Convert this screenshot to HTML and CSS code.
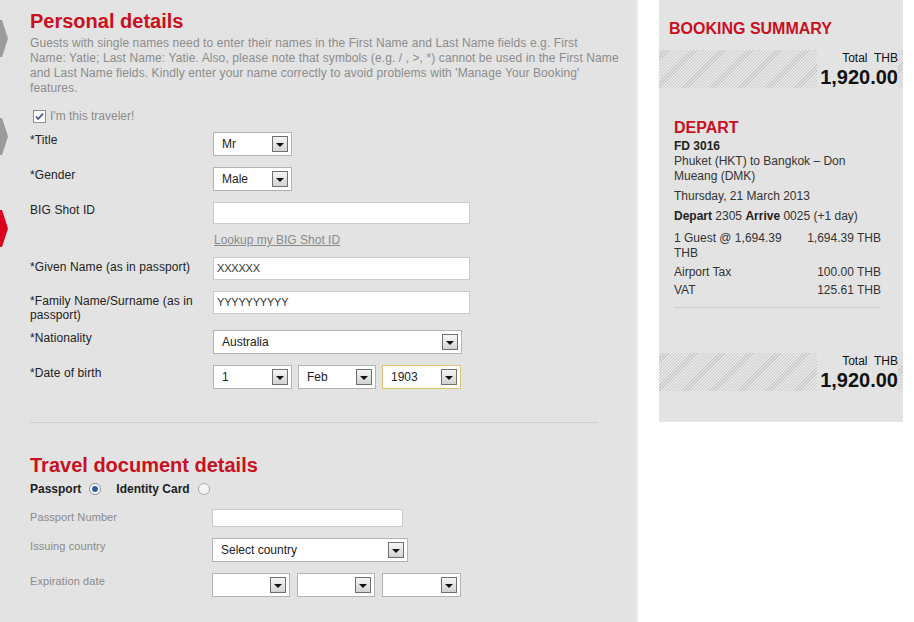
FILE: index.html
```html
<!DOCTYPE html>
<html lang="en">
<head>
    <meta charset="UTF-8">
    <title>Guest details</title>
    <link rel="stylesheet" href="styles.css">
</head>
<body>
    <div class="main">
        <div class="steps">
            <div class="step"></div>
            <div class="step step-2"></div>
            <div class="step step-3 active"></div>
        </div>

        <div class="content">
            <h1 class="title">Personal details</h1>
            <p class="intro">Guests with single names need to enter their names in the First Name and Last Name fields e.g. First<br>Name: Yatie; Last Name: Yatie. Also, please note that symbols (e.g. / , &gt;, *) cannot be used in the First Name<br>and Last Name fields. Kindly enter your name correctly to avoid problems with 'Manage Your Booking'<br>features.</p>

            <div class="check-line">
                <svg class="checkbox" width="13" height="13" viewBox="0 0 13 13">
                    <rect x="0.5" y="0.5" width="12" height="12" fill="#fff" stroke="#8a8f98"/>
                    <path d="M3 6.5 L5.2 9 L10 3.6" fill="none" stroke="#3c5a8c" stroke-width="1.8"/>
                </svg>
                <span>I'm this traveler!</span>
            </div>

            <div class="row">
                <label>*Title</label>
                <div class="select w79"><span>Mr</span><i class="arrow"></i></div>
            </div>
            <div class="row">
                <label>*Gender</label>
                <div class="select w79"><span>Male</span><i class="arrow"></i></div>
            </div>
            <div class="row">
                <label>BIG Shot ID</label>
                <div class="text"></div>
            </div>
            <div class="row link-row">
                <label></label>
                <a class="lookup" href="#">Lookup my BIG Shot ID</a>
            </div>
            <div class="row name-row">
                <label>*Given Name (as in passport)</label>
                <div class="text">XXXXXX</div>
            </div>
            <div class="row name-row">
                <label>*Family Name/Surname (as in passport)</label>
                <div class="text">YYYYYYYYYY</div>
            </div>
            <div class="row nationality">
                <label>*Nationality</label>
                <div class="select w249"><span>Australia</span><i class="arrow"></i></div>
            </div>
            <div class="row">
                <label>*Date of birth</label>
                <div class="date">
                    <div class="select w79"><span>1</span><i class="arrow"></i></div>
                    <div class="select w78"><span>Feb</span><i class="arrow"></i></div>
                    <div class="select w79 focus"><span>1903</span><i class="arrow"></i></div>
                </div>
            </div>

            <hr class="divider">

            <h1 class="title">Travel document details</h1>
            <div class="doc-type">
                <span>Passport</span>
                <svg class="radio" width="12" height="12" viewBox="0 0 12 12">
                    <circle cx="6" cy="6" r="5.5" fill="#fff" stroke="#8a8f98"/>
                    <circle cx="6" cy="6" r="3" fill="#2c5f9a"/>
                </svg>
                <span class="second">Identity Card</span>
                <svg class="radio" width="12" height="12" viewBox="0 0 12 12">
                    <circle cx="6" cy="6" r="5.5" fill="#f4f4f4" stroke="#a8acb2"/>
                </svg>
            </div>

            <div class="row doc-row">
                <label>Passport Number</label>
                <div class="text small"></div>
            </div>
            <div class="row doc-row">
                <label>Issuing country</label>
                <div class="select w196"><span>Select country</span><i class="arrow"></i></div>
            </div>
            <div class="row doc-row">
                <label>Expiration date</label>
                <div class="date wide">
                    <div class="select w78"><span></span><i class="arrow"></i></div>
                    <div class="select w78"><span></span><i class="arrow"></i></div>
                    <div class="select w79"><span></span><i class="arrow"></i></div>
                </div>
            </div>
        </div>
    </div>

    <div class="summary">
        <h2 class="summary-title">BOOKING SUMMARY</h2>
        <div class="total-band">
            <div class="total">
                <div class="total-label">Total&nbsp; THB</div>
                <div class="total-amount">1,920.00</div>
            </div>
        </div>

        <div class="flight">
            <h3 class="depart">DEPART</h3>
            <div class="flight-no">FD 3016</div>
            <div>Phuket (HKT) to Bangkok – Don<br>Mueang (DMK)</div>
            <div class="gap">Thursday, 21 March 2013</div>
            <div class="gap"><b>Depart</b> 2305 <b>Arrive</b> 0025 (+1 day)</div>
            <div class="price first">
                <span>1 Guest @ 1,694.39 THB</span>
                <span class="amount">1,694.39 THB</span>
            </div>
            <div class="price">
                <span>Airport Tax</span>
                <span class="amount">100.00 THB</span>
            </div>
            <div class="price last">
                <span>VAT</span>
                <span class="amount">125.61 THB</span>
            </div>
            <hr class="summary-line">
        </div>

        <div class="total-band bottom">
            <div class="total">
                <div class="total-label">Total&nbsp; THB</div>
                <div class="total-amount">1,920.00</div>
            </div>
        </div>
    </div>
</body>
</html>
```

FILE: styles.css
```css
body {
    margin: 0;
    font-family: "Liberation Sans", Arial, sans-serif;
    font-size: 12px;
    color: #222;
    background: #fff;
    display: flex;
    align-items: flex-start;
}
.main {
    width: 635px;
    min-height: 622px;
    background: #e3e3e3;
    border-right: 3px solid #e9e9e9;
    display: flex;
    align-items: flex-start;
}
.steps {
    width: 8px;
    padding-top: 20px;
    display: flex;
    flex-direction: column;
}
.step {
    height: 37px;
    background: #9b9b9b;
    clip-path: polygon(0 0, 25% 0, 100% 50%, 25% 100%, 0 100%);
}
.step-2 { margin-top: 61px; }
.step-3 { margin-top: 55px; }
.step.active { background: #d9001b; }

.content {
    width: 605px;
    padding: 10px 0 0 22px;
}
.title {
    margin: 0;
    font-size: 20px;
    line-height: 22px;
    font-weight: bold;
    color: #c8101e;
}
.intro {
    margin: 4px 0 0;
    line-height: 15px;
    color: #8c8c8c;
    white-space: nowrap;
    letter-spacing: 0.1px;
}
.check-line {
    margin-top: 12px;
    height: 16px;
    display: flex;
    align-items: center;
    color: #8c8c8c;
}
.checkbox { margin: 0 4px 0 3px; }

.row {
    display: grid;
    grid-template-columns: 183px 1fr;
    margin-top: 11px;
    align-items: start;
}
.check-line + .row { margin-top: 8px; }
.row label {
    padding: 1px 10px 0 0;
    line-height: 14px;
    letter-spacing: 0.1px;
}
.name-row label { padding-top: 3px; }
.link-row {
    line-height: 12px;
    margin-top: 10px;
}
.lookup {
    margin-left: 1px;
    color: #8a8a8a;
    text-decoration: underline;
}
.link-row + .row { margin-top: 11px; }
.row.nationality { margin-top: 8px; }
.text {
    width: 257px;
    height: 22px;
    box-sizing: border-box;
    border: 1px solid #cbcbcb;
    background: #fff;
    padding: 0 3px;
    font-size: 11px;
    line-height: 20px;
    color: #333;
    letter-spacing: -0.2px;
}
.name-row .text { height: 23px; line-height: 21px; }
.text.small {
    width: 191px;
    height: 18px;
}
.select {
    height: 24px;
    box-sizing: border-box;
    border: 1px solid #b3b3b3;
    background: #fff;
    padding: 0 3px 0 8px;
    display: flex;
    align-items: center;
    justify-content: space-between;
    color: #222;
}
.select.focus { border-color: #dfc27a; }
.w78 { width: 78px; }
.w79 { width: 79px; }
.w196 { width: 196px; }
.w249 { width: 249px; }
.arrow {
    width: 16px;
    height: 16px;
    box-sizing: border-box;
    border: 1px solid #6f6f6f;
    background: linear-gradient(#f6f6f6, #d3d3d3);
    display: flex;
    align-items: center;
    justify-content: center;
}
.arrow::after {
    content: "";
    border-left: 4px solid transparent;
    border-right: 4px solid transparent;
    border-top: 4px solid #111;
    margin-top: 1px;
}
.date {
    display: flex;
    gap: 6px;
}
.date.wide { gap: 7px; }

.divider {
    width: 568px;
    margin: 33px 0 0;
    border: 0;
    border-top: 1px solid #cdcdcd;
}
.divider + .title { margin-top: 31px; }
.doc-type {
    margin-top: 5px;
    height: 16px;
    display: flex;
    align-items: center;
    font-weight: bold;
    color: #1e1e1e;
}
.radio { margin-left: 8px; }
.doc-type .second { margin-left: 15px; }
.doc-row {
    grid-template-columns: 182px 1fr;
    margin-top: 11px;
}
.doc-type + .doc-row { margin-top: 12px; }
.doc-row label {
    font-size: 11px;
    color: #8a8a8a;
}

.summary {
    width: 244px;
    margin-left: 21px;
    height: 422px;
    box-sizing: border-box;
    padding-top: 19px;
    background: #e3e3e3;
}
.summary-title {
    margin: 0 0 0 10px;
    font-size: 16px;
    line-height: 20px;
    color: #c8101e;
}
.total-band {
    margin-top: 11px;
    display: flex;
    justify-content: flex-end;
    padding-right: 5px;
    background: repeating-linear-gradient(-45deg, #cbcbcb 0, #cbcbcb 1px, #e7e7e7 1px, #e7e7e7 2.2px);
}
.total-band.bottom { margin-top: 45px; }
.total {
    background: #e3e3e3;
    padding-left: 3px;
    text-align: right;
}
.total-label {
    line-height: 16px;
    color: #111;
}
.total-amount {
    font-size: 20px;
    font-weight: bold;
    line-height: 22px;
    color: #111;
}
.flight {
    margin-top: 30px;
    padding: 0 22px 0 15px;
    line-height: 15px;
    color: #333;
}
.depart {
    margin: 0 0 1px;
    font-size: 16px;
    line-height: 20px;
    color: #c8101e;
}
.flight-no {
    font-weight: bold;
    color: #222;
}
.flight b { color: #222; }
.gap { margin-top: 5px; }
.price {
    display: grid;
    grid-template-columns: 1fr auto;
    column-gap: 12px;
    margin-top: 4px;
}
.price.first { margin-top: 7px; }
.price.last { margin-top: 3px; }
.price .amount { white-space: nowrap; }
.summary-line {
    margin: 9px 0 0;
    border: 0;
    border-top: 1px solid #cdcdcd;
}
```
